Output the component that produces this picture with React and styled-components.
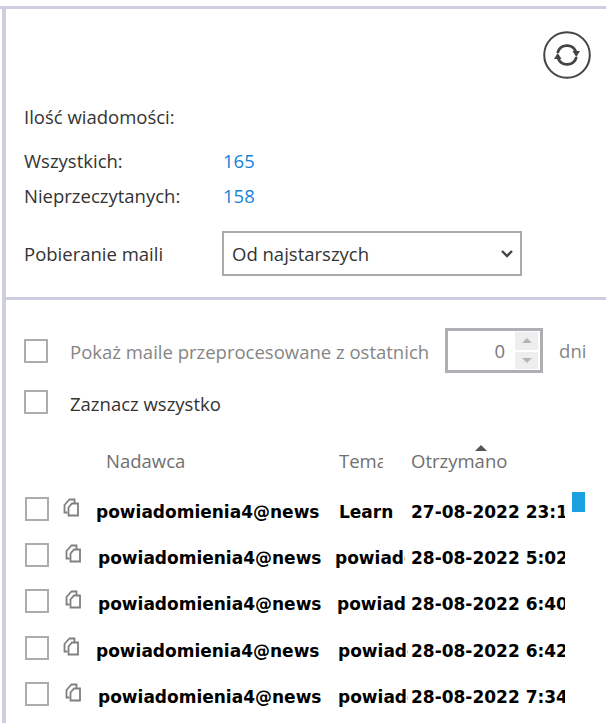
import React from 'react'
import styled, { createGlobalStyle } from 'styled-components'

const GlobalStyle = createGlobalStyle`
  html, body {
    margin: 0;
    padding: 0;
    background: #ffffff;
    overflow: hidden;
  }
  * {
    box-sizing: border-box;
  }
`

const Page = styled.div`
  width: 606px;
  height: 723px;
  padding-top: 6px;
  overflow: hidden;
  font-family: 'Open Sans', 'Noto Sans', sans-serif;
  font-size: 18.5px;
  color: #333333;
`

const TopRule = styled.div`
  height: 3px;
  background: #cdcfe0;
`

const Panel = styled.div`
  margin-left: 2px;
  height: 714px;
  border-left: 4px solid #cdcfe0;
`

const Summary = styled.section`
  height: 288px;
  padding: 22px 15px 0 18px;
  display: flex;
  flex-direction: column;
`

const RefreshRow = styled.div`
  display: flex;
  justify-content: flex-end;
  height: 66px;
`

const RefreshButton = styled.button`
  width: 48px;
  height: 48px;
  padding: 0;
  border: none;
  background: none;
  color: #444444;
`

const Heading = styled.div`
  margin-top: 8px;
  height: 24px;
  line-height: 24px;
`

const CountRow = styled.div`
  display: flex;
  height: 24px;
  line-height: 24px;
  margin-top: ${props => props.$gap}px;
`

const CountLabel = styled.span`
  width: 199px;
`

const CountValue = styled.span`
  color: #1683d8;
`

const SelectRow = styled.div`
  display: flex;
  align-items: center;
  margin-top: 23px;
`

const SelectLabel = styled.label`
  width: 198px;
`

const SelectWrap = styled.div`
  position: relative;
  width: 300px;
  height: 45px;
`

const MailSelect = styled.select`
  width: 100%;
  height: 100%;
  padding: 0 8px;
  border: 2px solid #a9a9ae;
  border-radius: 0;
  background: #ffffff;
  appearance: none;
  font-family: inherit;
  font-size: 18.5px;
  color: #333333;
`

const Chevron = styled.svg`
  position: absolute;
  top: 18px;
  right: 8px;
  width: 14px;
  height: 10px;
  pointer-events: none;
`

const Divider = styled.div`
  height: 3px;
  background: #cdcfe0;
`

const Filters = styled.section`
  padding: 28px 0 0 18px;
`

const FilterRow = styled.div`
  display: flex;
  align-items: center;
  height: 45px;
  color: ${props => (props.$muted ? '#858585' : '#333333')};
`

const SelectAllRow = styled(FilterRow)`
  height: 32px;
  margin-top: 13px;
`

const CheckBox = styled.span`
  flex: none;
  display: block;
  width: 24px;
  height: 24px;
  border: 2px solid #acacb0;
  background: #ffffff;
`

const FilterLabel = styled.span`
  margin-left: 22px;
  padding-top: 2px;
  white-space: nowrap;
`

const Stepper = styled.div`
  flex: none;
  display: flex;
  width: 98px;
  height: 45px;
  margin-left: 16px;
  border: 3px solid #adafb3;
`

const StepperValue = styled.div`
  flex: 1;
  padding-right: 10px;
  text-align: right;
  line-height: 40px;
  color: #777777;
`

const StepperButtons = styled.div`
  width: 25px;
  display: flex;
  flex-direction: column;
  gap: 2px;
  padding: 1px 2px 1px 0;
`

const StepperButton = styled.div`
  flex: 1;
  display: flex;
  align-items: center;
  justify-content: center;
  background: #eeeeee;
`

const Caret = styled.span`
  width: 0;
  height: 0;
  border-left: 5px solid transparent;
  border-right: 5px solid transparent;
  ${props => (props.$down ? 'border-top: 5px solid #b5b5b5;' : 'border-bottom: 5px solid #b5b5b5;')}
`

const DaysLabel = styled.span`
  margin-left: 16px;
`

const Table = styled.div`
  margin-top: 15px;
`

const HeaderRow = styled.div`
  display: grid;
  grid-template-columns: 82px 233px 72px 154px;
  height: 40px;
  color: #707070;
  align-items: end;
`

const HeaderCell = styled.div`
  position: relative;
  height: 24px;
  line-height: 24px;
  white-space: nowrap;
  width: ${props => props.$width || 'auto'};
  overflow: ${props => (props.$width ? 'hidden' : 'visible')};
`

const SortMark = styled.span`
  position: absolute;
  top: -4px;
  left: 64px;
  width: 0;
  height: 0;
  border-left: 6px solid transparent;
  border-right: 6px solid transparent;
  border-bottom: 6px solid #555555;
`

const Rows = styled.div`
  position: relative;
  padding-top: 16px;
`

const Marker = styled.span`
  position: absolute;
  top: 19px;
  left: 548px;
  width: 13px;
  height: 20px;
  background: #1ba1e2;
`

const MailRow = styled.div`
  display: flex;
  align-items: center;
  height: 46.2px;
  font-family: 'DejaVu Sans', 'Open Sans', sans-serif;
  font-size: 17px;
  font-weight: 700;
  color: #000000;
  white-space: nowrap;
`

const MailBox = styled(CheckBox)`
  margin-left: 1px;
  margin-top: -6px;
`

const AttachIcon = styled.svg`
  flex: none;
  width: 16px;
  height: 19px;
  margin-left: ${props => props.$left}px;
  margin-top: -9px;
  color: #808080;
`

const Sender = styled.div`
  flex: none;
  width: 223px;
  margin-left: 17px;
  overflow: hidden;
`

const Subject = styled.div`
  flex: none;
  overflow: hidden;
  margin-left: ${props => props.$left}px;
  margin-right: ${props => props.$right}px;
  width: ${props => props.$width}px;
`

const Received = styled.div`
  flex: none;
  width: 154px;
  overflow: hidden;
`

const rows = [
  { iconLeft: 14, subjectLeft: 20, subjectWidth: 72, subjectRight: 0, subject: 'Learn', date: '27-08-2022 23:15' },
  { iconLeft: 16, subjectLeft: 14, subjectWidth: 70, subjectRight: 6, subject: 'powiadomienie', date: '28-08-2022 5:02' },
  { iconLeft: 16, subjectLeft: 16, subjectWidth: 69, subjectRight: 5, subject: 'powiadomienie', date: '28-08-2022 6:40' },
  { iconLeft: 14, subjectLeft: 19, subjectWidth: 70, subjectRight: 3, subject: 'powiadomienie', date: '28-08-2022 6:42' },
  { iconLeft: 16, subjectLeft: 17, subjectWidth: 70, subjectRight: 3, subject: 'powiadomienie', date: '28-08-2022 7:34' },
]

function App() {
  return (
    <Page>
      <GlobalStyle />
      <TopRule />
      <Panel>
        <Summary>
          <RefreshRow>
            <RefreshButton aria-label="Odśwież">
              <svg viewBox="0 0 48 48" width="48" height="48" fill="none" stroke="currentColor">
                <circle cx="24" cy="24" r="22.8" strokeWidth="2" />
                <path d="M14.6 22A9.6 9.6 0 0 1 32.8 20.5M33.4 26A9.6 9.6 0 0 1 15.2 27.5" strokeWidth="2.8" />
                <path d="M29.5 20h7.5l-3.7 6z" fill="currentColor" stroke="none" />
                <path d="M11 28h7.5l-3.8-6z" fill="currentColor" stroke="none" />
              </svg>
            </RefreshButton>
          </RefreshRow>
          <Heading>Ilość wiadomości:</Heading>
          <CountRow $gap={20}>
            <CountLabel>Wszystkich:</CountLabel>
            <CountValue>165</CountValue>
          </CountRow>
          <CountRow $gap={11}>
            <CountLabel>Nieprzeczytanych:</CountLabel>
            <CountValue>158</CountValue>
          </CountRow>
          <SelectRow>
            <SelectLabel>Pobieranie maili</SelectLabel>
            <SelectWrap>
              <MailSelect defaultValue="old">
                <option value="old">Od najstarszych</option>
                <option value="new">Od najnowszych</option>
              </MailSelect>
              <Chevron viewBox="0 0 14 10" fill="none" stroke="#444444" strokeWidth="2.4">
                <path d="M2 2l5 5 5-5" />
              </Chevron>
            </SelectWrap>
          </SelectRow>
        </Summary>
        <Divider />
        <Filters>
          <FilterRow $muted>
            <CheckBox />
            <FilterLabel>Pokaż maile przeprocesowane z ostatnich</FilterLabel>
            <Stepper>
              <StepperValue>0</StepperValue>
              <StepperButtons>
                <StepperButton><Caret /></StepperButton>
                <StepperButton><Caret $down /></StepperButton>
              </StepperButtons>
            </Stepper>
            <DaysLabel>dni</DaysLabel>
          </FilterRow>
          <SelectAllRow>
            <CheckBox />
            <FilterLabel>Zaznacz wszystko</FilterLabel>
          </SelectAllRow>
          <Table>
            <HeaderRow>
              <span />
              <HeaderCell>Nadawca</HeaderCell>
              <HeaderCell $width="44px">Temat</HeaderCell>
              <HeaderCell>
                Otrzymano
                <SortMark />
              </HeaderCell>
            </HeaderRow>
            <Rows>
              <Marker />
              {rows.map(row => (
                <MailRow key={row.date}>
                  <MailBox />
                  <AttachIcon $left={row.iconLeft} viewBox="0 0 16 19" fill="none" stroke="currentColor" strokeWidth="1.8">
                    <path d="M4.5 14.5H1.5V7L6.5 1.5H11.5V5.5" />
                    <path d="M5.5 17.5V9.5L9 5.5H15V17.5Z" />
                  </AttachIcon>
                  <Sender>powiadomienia4@newsletter.pl</Sender>
                  <Subject $left={row.subjectLeft} $width={row.subjectWidth} $right={row.subjectRight}>{row.subject}</Subject>
                  <Received>{row.date}</Received>
                </MailRow>
              ))}
            </Rows>
          </Table>
        </Filters>
      </Panel>
    </Page>
  )
}

export default App
